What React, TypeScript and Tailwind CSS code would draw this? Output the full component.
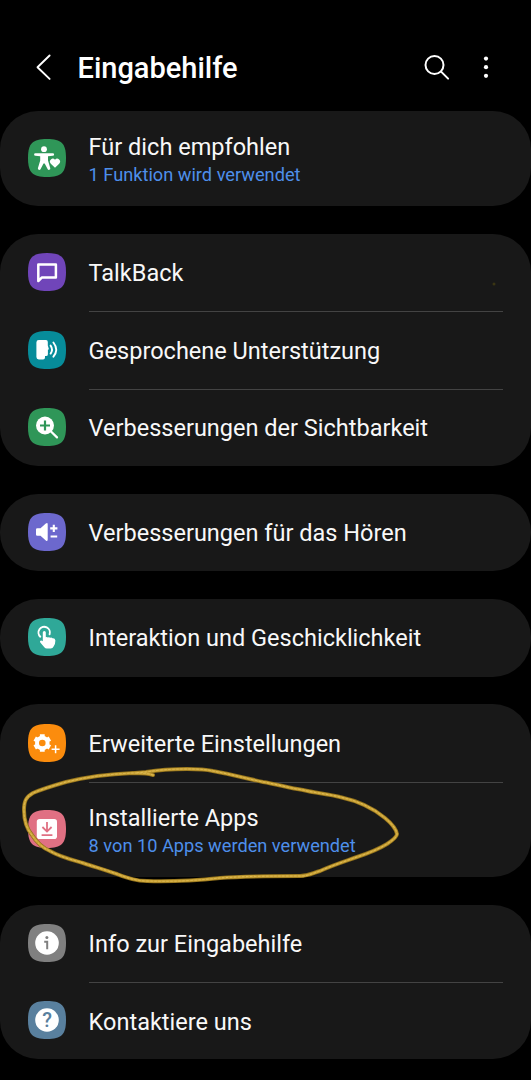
import type { ReactNode } from 'react';

type Item = {
  title: string;
  subtitle?: string;
  color: string;
  icon: ReactNode;
};

const PersonIcon = (
  <>
    <circle cx="16" cy="10.200" r="2.900" fill="#fff" />
    <path
      d="M7.400 14.200h17.400a1.300 1.300 0 0 1 0 2.600L20 17.300v4.300l2.300 7.700a1.400 1.400 0 0 1-2.600.9L16.700 24.600h-1.200L12.500 30.200a1.400 1.400 0 0 1-2.600-.9l2.300-7.700v-4.300l-4.800-.5a1.300 1.300 0 0 1 0-2.600z"
      fill="#fff"
    />
    <path
      d="M27 28.800l-4.200-4.100a2.900 2.900 0 0 1 4.200-4 2.900 2.900 0 0 1 4.200 4z"
      fill="#fff"
    />
  </>
);

const BubbleIcon = (
  <path
    d="M10.300 28V11.400h17.600v13.200H13.700z"
    fill="none"
    stroke="#fff"
    strokeWidth="2.500"
    strokeLinejoin="round"
  />
);

const SpeakIcon = (
  <>
    <path
      d="M10.800 9h7.200q1.800 0 1.800 2v3.500l1 3.300q.2.900-.9 1v4.400q0 1.900-1.900 1.900h-1v1.500q0 1.900-1.900 1.900h-4.300q-2.400 0-2.400-2.400V11.400Q8.400 9 10.800 9z"
      fill="#fff"
    />
    <g fill="none" stroke="#fff" strokeWidth="1.900" strokeLinecap="round">
      <path d="M22.600 14.600q2.800 4 0 8" />
      <path d="M25.400 11.500q5.600 7.100 0 14.200" />
    </g>
  </>
);

const ZoomIcon = (
  <>
    <circle cx="17" cy="17.500" r="9" fill="#fff" />
    <path d="M23 23.500l6 5.900" stroke="#fff" strokeWidth="2.200" strokeLinecap="round" />
    <path d="M17 12.500v10M12 17.500h10" stroke="#2f9658" strokeWidth="2.200" />
  </>
);

const VolumeIcon = (
  <>
    <path
      d="M9.300 15.300h3.200l5.300-4.700q1.900-1.400 1.900.8v15.200q0 2.200-1.900.8l-5.300-4.700H9.300q-1.300 0-1.300-1.300v-4.800q0-1.300 1.300-1.300z"
      fill="#fff"
    />
    <path d="M25.800 11.800v7.200M22.200 15.400h7.200M22.600 23.500h6.600" stroke="#fff" strokeWidth="2.100" />
  </>
);

const TouchIcon = (
  <>
    <path
      d="M12.300 18.700a5.700 5.700 0 1 1 9.300-2.400"
      fill="none"
      stroke="#fff"
      strokeWidth="1.900"
      strokeLinecap="round"
    />
    <path
      d="M14.800 14.400a1.500 1.500 0 0 1 3 0v4.800q1-.6 2.100.3 1.300-.7 2.300.3 1.200-.6 2.300.4 2.600-.3 2.900 2.300 0 3.500-1.800 6.100-.9 1.900-2.800 1.900h-4q-1.500 0-2.500-1.200l-4-4.700q-.8-1.200.2-1.900.9-.5 2.300.6z"
      fill="#fff"
    />
  </>
);

const GearIcon = (
  <>
    <circle cx="14.300" cy="19" r="5.300" fill="none" stroke="#fff" strokeWidth="4" />
    <g stroke="#fff" strokeWidth="4.800">
      <path d="M14.300 10.200v3.300M14.300 24.500v3.300" />
      <path d="M6.700 14.600l2.900 1.650M19 21.750l2.900 1.650" />
      <path d="M6.700 23.400l2.900-1.650M19 16.250l2.900-1.650" />
    </g>
    <path d="M27.600 21.300v8M23.600 25.300h8" stroke="#fb8c0d" strokeWidth="4" />
    <path d="M27.600 21.300v8M23.600 25.300h8" stroke="#fff" strokeWidth="1.500" />
  </>
);

const DownloadIcon = (
  <>
    <rect x="8.800" y="9" width="20.200" height="20" rx="2.800" fill="#fff" />
    <path
      d="M19 12v9.300M14.400 17l4.600 4.600 4.600-4.600M13.600 25.200h10.800"
      fill="none"
      stroke="#e07083"
      strokeWidth="1.800"
    />
  </>
);

const InfoIcon = (
  <>
    <circle cx="19" cy="19" r="11.800" fill="#fff" />
    <circle cx="18.900" cy="13.600" r="1.500" fill="#808080" />
    <path d="M16.200 17.700h3v7.600" fill="none" stroke="#808080" strokeWidth="2" />
  </>
);

const HelpIcon = (
  <>
    <circle cx="19" cy="19" r="11.800" fill="#fff" />
    <text
      x="19"
      y="25.900"
      textAnchor="middle"
      fill="#59809e"
      className="font-['Roboto',sans-serif] text-[20px] font-medium"
    >
      ?
    </text>
  </>
);

const GROUPS: Item[][] = [
  [
    {
      title: 'Für dich empfohlen',
      subtitle: '1 Funktion wird verwendet',
      color: 'fill-[#2f9658]',
      icon: PersonIcon,
    },
  ],
  [
    { title: 'TalkBack', color: 'fill-[#7045b9]', icon: BubbleIcon },
    { title: 'Gesprochene Unterstützung', color: 'fill-[#078c9a]', icon: SpeakIcon },
    { title: 'Verbesserungen der Sichtbarkeit', color: 'fill-[#2f9658]', icon: ZoomIcon },
  ],
  [{ title: 'Verbesserungen für das Hören', color: 'fill-[#6c68cd]', icon: VolumeIcon }],
  [{ title: 'Interaktion und Geschicklichkeit', color: 'fill-[#2fa898]', icon: TouchIcon }],
  [
    { title: 'Erweiterte Einstellungen', color: 'fill-[#fb8c0d]', icon: GearIcon },
    {
      title: 'Installierte Apps',
      subtitle: '8 von 10 Apps werden verwendet',
      color: 'fill-[#e07083]',
      icon: DownloadIcon,
    },
  ],
  [
    { title: 'Info zur Eingabehilfe', color: 'fill-[#808080]', icon: InfoIcon },
    { title: 'Kontaktiere uns', color: 'fill-[#59809e]', icon: HelpIcon },
  ],
];

function Row({ item, divided }: { item: Item; divided: boolean }) {
  return (
    <div className={`flex px-7 ${item.subtitle ? 'h-[95px]' : 'h-[77.4px]'}`}>
      <div className="flex w-[60.6px] shrink-0 items-center">
        <svg viewBox="0 0 38 38" className="-mt-px size-[38px]">
          <path
            d="M19 0C33.500 0 38 4.500 38 19S33.500 38 19 38 0 33.500 0 19 4.500 0 19 0z"
            className={item.color}
          />
          {item.icon}
        </svg>
      </div>
      <div
        className={`flex flex-1 flex-col justify-center whitespace-nowrap ${
          divided ? 'border-t border-[#434343]' : ''
        } ${item.subtitle ? 'pt-[3px]' : 'pt-px'}`}
      >
        <p className="text-[23.530px] leading-[30px] text-[#f8f8f8]">{item.title}</p>
        {item.subtitle && (
          <p className="text-[18.2px] leading-[26.500px] text-[#4e8fea]">{item.subtitle}</p>
        )}
      </div>
    </div>
  );
}

// Hand-drawn marker loop around the installed apps entry
function MarkerLoop() {
  const loop =
    'M153 775C147 773 140 773 133 773C110 774 86 777 66 782C52 786 42 789 33 793C26 797 24 801 24 810C24 820 26 828 32 835C37 843 43 848 50 851C60 857 73 860 83 863C95 867 106 870 117 874C128 878 136 881 147 881C180 882 200 880 220 878C245 876 278 876 300 876C309 876 313 873 320 871C333 865 346 861 357 857C369 853 379 849 387 844C393 840 397 837 397 834C396 828 391 823 385 818C372 807 358 801 340 797C328 794 315 793 303 790C289 788 276 784 263 782C245 778 229 774 213 771C204 769 195 769 187 769C170 769 158 770 146 772L135 773';
  return (
    <svg
      viewBox="0 0 531 1080"
      className="pointer-events-none absolute inset-0 h-[1080px] w-[531px]"
      fill="none"
      strokeLinecap="round"
      strokeLinejoin="round"
    >
      <path d={loop} stroke="#8e6f1b" strokeWidth="4" />
      <path d={loop} stroke="#c9a136" strokeWidth="2.600" />
      <path d={loop} stroke="#e0bd55" strokeWidth="1" strokeDasharray="1.500 2.500" />
      <circle cx="494" cy="284" r="1.500" fill="#3a3513" />
    </svg>
  );
}

export default function App() {
  return (
    <div className="relative h-[1080px] w-[531px] overflow-hidden bg-black font-['Roboto',sans-serif]">
      <header className="flex h-[111.2px] items-center pl-[35px] pr-[34px] pt-[24px]">
        <svg viewBox="0 0 16 28" className="h-7 w-4" fill="none" stroke="#fff" strokeWidth="1.900">
          <path d="M14.600 1.500L2.500 13.200l12.100 11.700" strokeLinecap="round" strokeLinejoin="round" />
        </svg>
        <h1 className="ml-[26.5px] pt-px text-[29px] font-medium leading-9 text-white">
          Eingabehilfe
        </h1>
        <svg
          viewBox="0 0 26 26"
          className="ml-auto size-[26px]"
          fill="none"
          stroke="#fff"
          strokeWidth="2"
          strokeLinecap="round"
        >
          <circle cx="10.500" cy="10" r="9" />
          <path d="M17.100 16.600l7 7" />
        </svg>
        <svg viewBox="0 0 22 26" className="ml-[25.5px] h-[26px] w-[22px]" fill="#fff">
          <circle cx="11" cy="3.600" r="2.100" />
          <circle cx="11" cy="12.200" r="2.100" />
          <circle cx="11" cy="20.800" r="2.100" />
        </svg>
      </header>

      <main className="flex flex-col gap-[27.8px]">
        {GROUPS.map((group) => (
          <section key={group[0].title} className="rounded-[38px] bg-[#181818]">
            {group.map((item, i) => (
              <Row key={item.title} item={item} divided={i > 0} />
            ))}
          </section>
        ))}
      </main>

      <MarkerLoop />
    </div>
  );
}
